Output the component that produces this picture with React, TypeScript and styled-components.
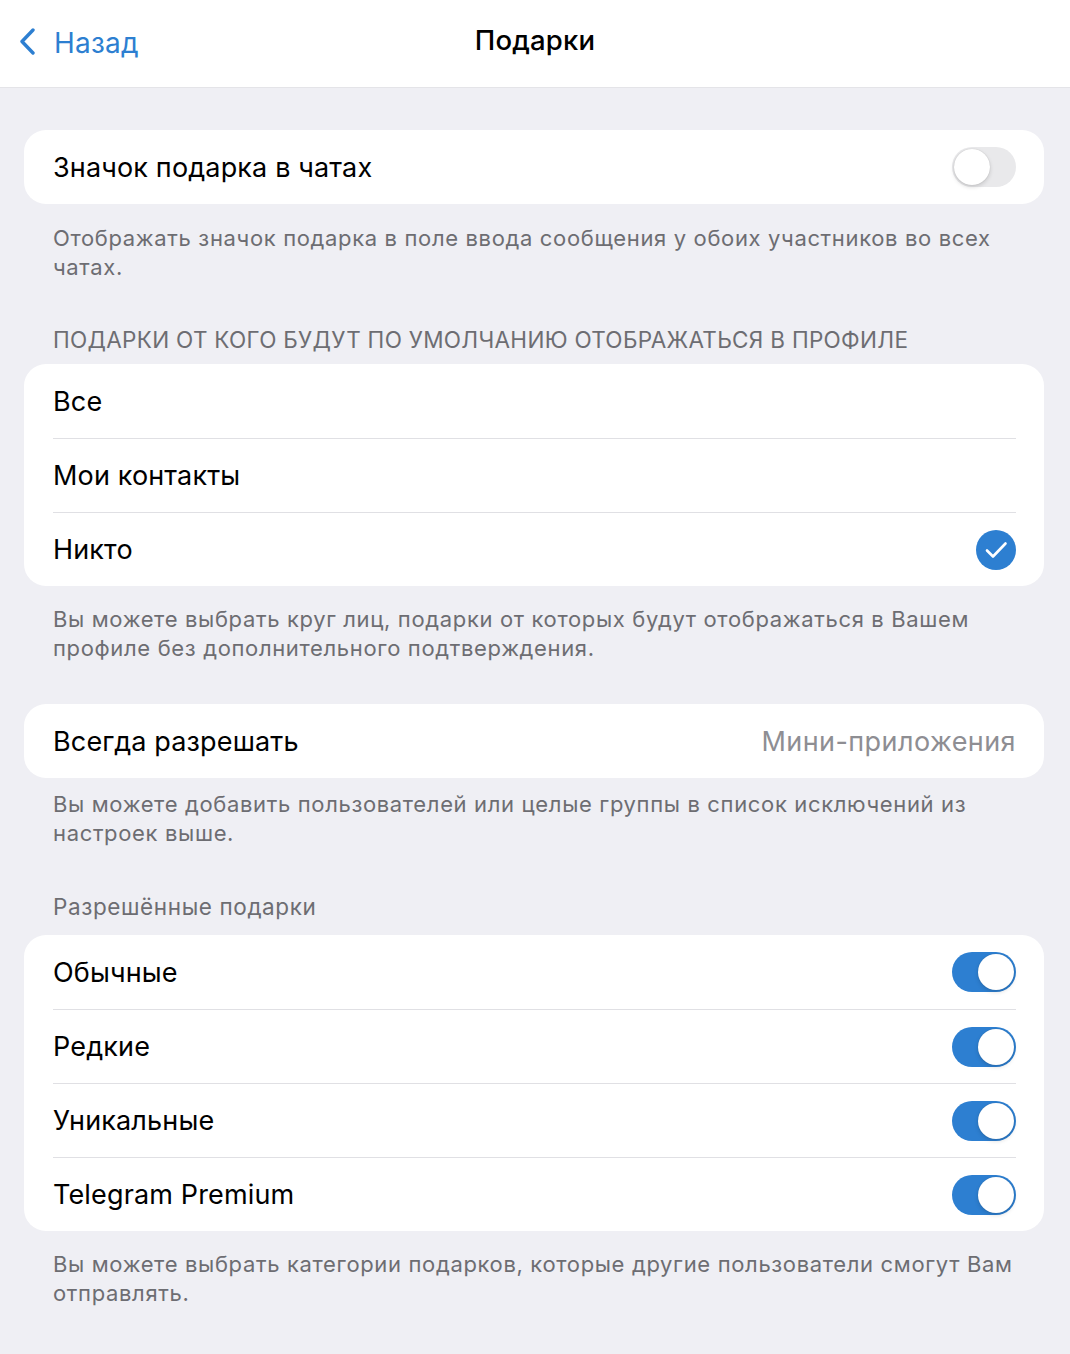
import React from "react"
import styled, { createGlobalStyle } from "styled-components"

const GlobalStyle = createGlobalStyle`
  html, body {
    margin: 0;
    padding: 0;
    background: #efeff4;
  }
  body {
    font-family: "Inter", "Noto Sans", sans-serif;
    -webkit-font-smoothing: antialiased;
  }
`

const BLUE = "#2d7fd1"

const App = () => {
  return (
    <Page>
      <GlobalStyle />
      <Header>
        <BackButton>
          <svg width="20" height="28" viewBox="0 0 20 28" fill="none">
            <path d="M15 2 L4 13.5 L15 25" stroke={BLUE} strokeWidth="3.4" strokeLinecap="round" strokeLinejoin="round" />
          </svg>
          <BackText>Назад</BackText>
        </BackButton>
        <Title>Подарки</Title>
      </Header>

      <Content>
        <Card>
          <Row>
            <RowLabel>Значок подарка в чатах</RowLabel>
            <Toggle on={false} />
          </Row>
        </Card>
        <Footer gap={20}>Отображать значок подарка в поле ввода сообщения у обоих участников во всех чатах.</Footer>

        <SectionTitle upper>Подарки от кого будут по умолчанию отображаться в профиле</SectionTitle>
        <Card>
          <Row>
            <RowLabel>Все</RowLabel>
          </Row>
          <Row>
            <RowLabel>Мои контакты</RowLabel>
          </Row>
          <Row>
            <RowLabel>Никто</RowLabel>
            <Check>
              <svg width="40" height="40" viewBox="0 0 40 40" fill="none">
                <path d="M11 20.5 L17 26.5 L29.5 13.5" stroke="#fff" strokeWidth="2.6" strokeLinecap="round" strokeLinejoin="round" />
              </svg>
            </Check>
          </Row>
        </Card>
        <Footer gap={19}>Вы можете выбрать круг лиц, подарки от которых будут отображаться в Вашем профиле без дополнительного подтверждения.</Footer>

        <Card spaced>
          <Row>
            <RowLabel>Всегда разрешать</RowLabel>
            <RowValue>Мини-приложения</RowValue>
          </Row>
        </Card>
        <Footer gap={12}>Вы можете добавить пользователей или целые группы в список исключений из настроек выше.</Footer>

        <SectionTitle>Разрешённые подарки</SectionTitle>
        <Card>
          {["Обычные", "Редкие", "Уникальные", "Telegram Premium"].map((name) => (
            <Row key={name}>
              <RowLabel>{name}</RowLabel>
              <Toggle on />
            </Row>
          ))}
        </Card>
        <Footer gap={19}>Вы можете выбрать категории подарков, которые другие пользователи смогут Вам отправлять.</Footer>
      </Content>
    </Page>
  )
}

const Toggle = ({ on }: { on: boolean }) => (
  <Track on={on}>
    <Knob on={on} />
  </Track>
)

const Page = styled.div`
  width: 1070px;
  min-height: 1354px;
  background: #efeff4;
`
const Header = styled.div`
  position: relative;
  height: 88px;
  background: #fff;
  border-bottom: 1px solid #e4e4e8;
  box-sizing: border-box;
  display: flex;
  align-items: center;
  justify-content: center;
`
const BackButton = styled.div`
  position: absolute;
  left: 18px;
  top: 24px;
  display: flex;
  align-items: center;
  gap: 16px;
`
const BackText = styled.span`
  font-size: 28px;
  color: ${BLUE};
  letter-spacing: 0.2px;
  margin-top: 2px;
`
const Title = styled.div`
  font-size: 27.5px;
  font-weight: 500;
  color: #000;
  margin-top: -8px;
  letter-spacing: 0.2px;
`
const Content = styled.div`
  padding: 42px 26px 40px 24px;
  display: flex;
  flex-direction: column;
`
const Card = styled.div<{ spaced?: boolean }>`
  background: #fff;
  border-radius: 22px;
  overflow: hidden;
  margin-top: ${(p) => (p.spaced ? "41px" : "0")};
`
const Row = styled.div`
  height: 74px;
  box-sizing: border-box;
  margin: 0 28px 0 29px;
  display: flex;
  align-items: center;
  justify-content: space-between;
  & + & {
    border-top: 1px solid #e0e0e4;
  }
`
const RowLabel = styled.span`
  font-size: 27px;
  color: #000;
  letter-spacing: 0.15px;
`
const RowValue = styled.span`
  font-size: 27px;
  color: #8e8e93;
  letter-spacing: 0.43px;
`
const Footer = styled.div<{ gap: number }>`
  padding: ${(p) => p.gap}px 10px 0 29px;
  font-size: 22px;
  line-height: 29px;
  color: #6d6d72;
  letter-spacing: 0.65px;
`
const SectionTitle = styled.div<{ upper?: boolean }>`
  margin-top: ${(p) => (p.upper ? "43px" : "44px")};
  padding: 0 29px ${(p) => (p.upper ? "10px" : "14px")};
  font-size: 22.5px;
  line-height: 29px;
  color: #6d6d72;
  letter-spacing: ${(p) => (p.upper ? "0.3px" : "0.6px")};
  text-transform: ${(p) => (p.upper ? "uppercase" : "none")};
`
const Track = styled.div<{ on: boolean }>`
  width: 64px;
  height: 40px;
  border-radius: 20px;
  background: ${(p) => (p.on ? BLUE : "#e9e9eb")};
  position: relative;
  flex-shrink: 0;
`
const Knob = styled.div<{ on: boolean }>`
  position: absolute;
  top: 2px;
  left: ${(p) => (p.on ? "26px" : "2px")};
  width: 36px;
  height: 36px;
  border-radius: 50%;
  background: #fff;
  box-shadow: 0 2px 4px rgba(0, 0, 0, 0.15), 0 0 1px rgba(0, 0, 0, 0.2);
`
const Check = styled.div`
  width: 40px;
  height: 40px;
  border-radius: 50%;
  background: ${BLUE};
  display: flex;
  align-items: center;
  justify-content: center;
`

export default App
